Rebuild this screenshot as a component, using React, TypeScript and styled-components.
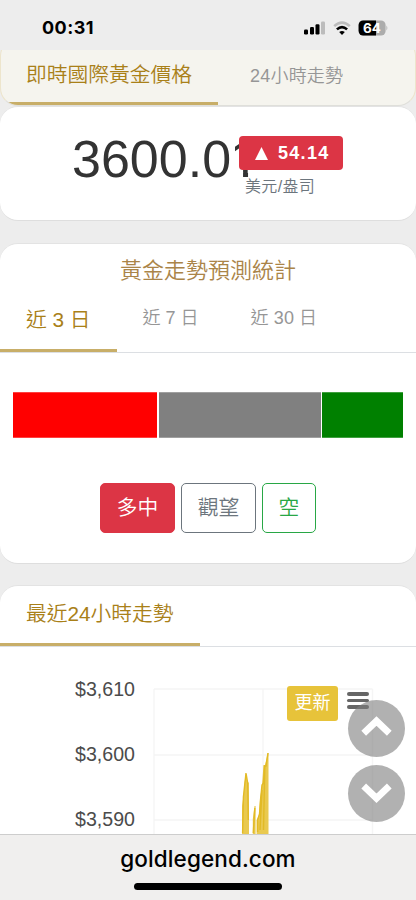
import React from "react";
import styled, { createGlobalStyle } from "styled-components";

const Global = createGlobalStyle`
  * { box-sizing: border-box; }
  body { margin: 0; background: #ededed; font-family: "Liberation Sans", "Noto Sans CJK TC", sans-serif; font-weight: 350; }
  button { font: inherit; cursor: pointer; }
`;

const Screen = styled.div`
  position: relative;
  display: flex;
  flex-direction: column;
  width: 416px;
  height: 900px;
  overflow: hidden;
  background: #ededed;
`;
const StatusBar = styled.header`
  flex: none;
  height: 50px;
  padding: 5px 28px 0 42px;
  display: flex;
  align-items: center;
  justify-content: space-between;
`;
const Clock = styled.span`
  font: 700 18px/22px Inter, sans-serif;
  color: #000;
  letter-spacing: 0.45px;
`;
const Content = styled.main`
  flex: none;
  height: 784px;
  overflow: hidden;
  display: flex;
  flex-direction: column;
`;
const StickyClip = styled.div`
  flex: none;
  height: 56px;
  overflow: hidden;
`;
const StickyTabs = styled.nav`
  display: flex;
  align-items: flex-end;
  height: 68px;
  margin-top: -12px;
  border: 1px solid #ede5cc;
  border-top-color: transparent;
  border-bottom-color: #dfdfda;
  border-radius: 18px;
  background: #f5f4ee;
  overflow: hidden;
`;
const Tabs = styled.nav<{ $h?: number }>`
  display: flex;
  height: ${p => p.$h ?? 66}px;
  border-bottom: 1px solid #dcdfe3;
`;
const Tab = styled.span<{ $active?: boolean; $pad?: number; $h?: number; $line?: number; $gap?: number }>`
  height: ${p => p.$h ?? 65}px;
  padding: 0 26px 0 ${p => p.$pad ?? 26}px;
  border-bottom: 3px solid ${p => (p.$active ? "#c8ae68" : "transparent")};
  font-size: ${p => (p.$active ? 20.75 : 18)}px;
  line-height: ${p => p.$line ?? 65}px;
  color: ${p => (p.$active ? "#a98018" : "#969696")};
  letter-spacing: ${p => p.$gap ?? 0}px;
  white-space: nowrap;
`;
const Card = styled.section<{ $h: number; $gap?: number }>`
  flex: none;
  height: ${p => p.$h}px;
  margin-bottom: ${p => p.$gap ?? 22}px;
  border-top: 1px solid #e3e3e3;
  border-bottom: 1px solid #dedede;
  border-radius: 18px;
  background: #fff;
  overflow: hidden;
`;
const PriceRow = styled.div`
  display: flex;
  align-items: flex-start;
  padding: 22px 0 0 72px;
`;
const Price = styled.strong`
  font-weight: 400;
  font-size: 52px;
  line-height: 60px;
  width: 167px;
  white-space: nowrap;
  color: #333;
`;
/* The last digit keeps only its stem, without the foot serif. */
const PlainOne = styled.span`
  display: inline-block;
  margin-left: -1px;
  clip-path: polygon(0 0, 100% 0, 100% 43px, 18px 43px, 18px 100%, 13px 100%, 13px 43px, 0 43px);
`;
const Change = styled.div`
  position: relative;
  margin-top: 7px;
`;
const Badge = styled.div`
  display: flex;
  align-items: center;
  width: 104px;
  height: 34px;
  padding-left: 15px;
  gap: 9px;
  border-radius: 4px;
  background: #dc3545;
  color: #fff;
  font-size: 18px;
  font-weight: 700;
  letter-spacing: 1.3px;
`;
const Unit = styled.div`
  padding: 5px 0 0 6px;
  font-size: 16px;
  line-height: 24px;
  color: #6c757d;
  letter-spacing: 0.35px;
`;
const Title = styled.h2`
  margin: 0;
  padding-top: 11px;
  height: 43px;
  text-align: center;
  font-size: 22px;
  line-height: 32px;
  font-weight: 350;
  color: #aa8448;
`;
const Forecast = styled.div`
  display: grid;
  grid-template-columns: 144px 162px 80.5px;
  gap: 1.6px;
  height: 46px;
  margin: 39px 13px 45px;
`;
const Segment = styled.div<{ $color: string }>`
  background: ${p => p.$color};
  border-block: 1px solid rgba(255, 255, 255, 0.25);
`;
const Actions = styled.div`
  display: flex;
  justify-content: center;
  gap: 5.5px;
`;
const ActionButton = styled.button<{ $color: string; $filled?: boolean; $w: number }>`
  width: ${p => p.$w}px;
  height: 49.5px;
  padding: 0;
  border: 1.5px solid ${p => p.$color};
  border-radius: 5px;
  background: ${p => (p.$filled ? p.$color : "#fff")};
  color: ${p => (p.$filled ? "#fff" : p.$color)};
  font-size: 20.75px;
  line-height: 30px;
`;
const Chart = styled.div`
  position: relative;
  height: 188px;
`;
const ChartSvg = styled.svg`
  display: block;
  text { font: 400 19.6px "Liberation Sans", sans-serif; fill: #4b4b4b; text-anchor: end; }
`;
const Refresh = styled.button`
  position: absolute;
  left: 287px;
  top: 39px;
  width: 51px;
  height: 35px;
  padding: 0 0 5px;
  border: 0;
  border-radius: 3px;
  background: #e7c33a;
  color: #fff;
  font-size: 18px;
  font-weight: 400;
`;
const Menu = styled.div`
  position: absolute;
  left: 346.5px;
  top: 45px;
  width: 22px;
  display: grid;
  gap: 3px;
`;
const MenuLine = styled.span`
  height: 3.7px;
  border-radius: 2px;
  background: #666;
`;
const ScrollControls = styled.div`
  position: absolute;
  right: 11.5px;
  top: 699.5px;
  display: grid;
  gap: 8px;
`;
const Round = styled.button`
  width: 57px;
  height: 57px;
  padding: 0;
  border: 0;
  border-radius: 50%;
  background: rgba(125, 125, 125, 0.6);
`;
const ArrowSvg = styled.svg`
  display: block;
`;
const BrowserBar = styled.footer`
  flex: none;
  height: 66px;
  border-top: 1px solid #cdcdcd;
  background: #f0efee;
  display: flex;
  flex-direction: column;
  align-items: center;
`;
const Address = styled.span`
  margin-top: 10px;
  font: 500 22.5px/28px Inter, sans-serif;
  letter-spacing: 0.1px;
  color: #000;
`;
const HomeBar = styled.div`
  width: 148px;
  height: 7px;
  margin-top: 10px;
  border-radius: 4px;
  background: #000;
`;

function StatusIcons() {
  return (
    <svg width="84" height="18" viewBox="304 18.5 84 18">
      <rect x="304" y="29" width="4" height="5" rx="1.2" />
      <rect x="310" y="26.5" width="4" height="7.5" rx="1.2" />
      <rect x="315.5" y="23.8" width="4" height="10.2" rx="1.2" />
      <rect x="321" y="21" width="4" height="13" rx="1.2" fill="#bcbcbc" />
      <path d="M334.2 25.6Q342 18.6 349.8 25.6" fill="none" stroke="#bcbcbc" strokeWidth="2.6" />
      <path d="M336.9 28.9Q342 24.4 347.1 28.9" fill="none" stroke="#000" strokeWidth="2.6" />
      <path d="M339.2 31.4Q342 29.4 344.8 31.4L342 34.4Z" />
      <rect x="358.6" y="20" width="27" height="15" rx="4.6" fill="#acacac" />
      <path d="M363.2 20H376V35H363.2A4.6 4.6 0 0 1 358.6 30.4V24.6A4.6 4.6 0 0 1 363.2 20Z" />
      <path d="M386.4 25Q388.4 27.5 386.4 30Z" fill="#b5b5b5" />
      <text x="372" y="32.3" textAnchor="middle" fontFamily="Inter" fontWeight="700" fontSize="13.5" fill="#fff">64</text>
    </svg>
  );
}

function Arrow({ down }: { down?: boolean }) {
  return (
    <ArrowSvg width="57" height="57" viewBox="0 0 57 57">
      <path
        d={down ? "M15.7 21L28.5 33.2L41.3 21" : "M15.7 33.3L28.5 21L41.3 33.3"}
        fill="none"
        stroke="#fff"
        strokeWidth="6.8"
      />
    </ArrowSvg>
  );
}

export default function App() {
  return (
    <>
      <Global />
      <Screen>
        <StatusBar>
          <Clock>00:31</Clock>
          <StatusIcons />
        </StatusBar>
        <Content>
          <StickyClip>
            <StickyTabs>
              <Tab $active $pad={25} $h={66} $line={72}>即時國際黃金價格</Tab>
              <Tab $pad={32} $h={66} $line={75} $gap={0.2}>24小時走勢</Tab>
            </StickyTabs>
          </StickyClip>
          <Card $h={115}>
            <PriceRow>
              <Price>3600.0<PlainOne>1</PlainOne></Price>
              <Change>
                <Badge>
                  <svg width="15" height="13" viewBox="0 0 15 13"><path d="M7.5 0L14 13H1Z" fill="#fff" /></svg>
                  54.14
                </Badge>
                <Unit>美元/盎司</Unit>
              </Change>
            </PriceRow>
          </Card>
          <Card $h={321} $gap={21}>
            <Title>黃金走勢預測統計</Title>
            <Tabs>
              <Tab $active>近 3 日</Tab>
              <Tab $line={63}>近 7 日</Tab>
              <Tab $line={63} $gap={0.1}>近 30 日</Tab>
            </Tabs>
            <Forecast>
              <Segment $color="#f00" />
              <Segment $color="#808080" />
              <Segment $color="#008000" />
            </Forecast>
            <Actions>
              <ActionButton $color="#dc3545" $filled $w={75.5}>多中</ActionButton>
              <ActionButton $color="#6c757d" $w={75.5}>觀望</ActionButton>
              <ActionButton $color="#28a745" $w={54.5}>空</ActionButton>
            </Actions>
          </Card>
          <Card $h={280}>
            <Tabs $h={61}>
              <Tab $active $h={60} $line={56}>最近24小時走勢</Tab>
            </Tabs>
            <Chart>
              <ChartSvg width="416" height="188" viewBox="0 647 416 188">
                <path d="M154 689V836M263 689V836M372.5 689V836M154 689H372.5M154 755H372.5M154 820H372.5" fill="none" stroke="#f5f5f5" strokeWidth="1.4" />
                <text x="135" y="696">$3,610</text>
                <text x="135" y="761">$3,600</text>
                <text x="135" y="826">$3,590</text>
                <path d="M242 836V806L243.5 796L244.6 782L246 773L247.3 781L248.8 783L249 806V836ZM252.8 836V819L254.5 806H255.6V836ZM256.6 836V820L259 815L260 800L262 785L263.5 765H265L266.6 758L267.5 753H268.5V836Z" fill="#e9c94f" />
                <path d="M242.6 833L243.4 797L246 773L247.7 783L248.3 820M253.3 833L254.8 808M257.6 832V820L259.5 814L260.5 800L262 785L263.5 783L264.5 766H266L268 753M260 830L262 790M263.5 830L264.8 766" fill="none" stroke="#e2ba25" strokeWidth="1.4" />
              </ChartSvg>
              <Refresh>更新</Refresh>
              <Menu><MenuLine /><MenuLine /><MenuLine /></Menu>
            </Chart>
          </Card>
        </Content>
        <BrowserBar>
          <Address>goldlegend.com</Address>
          <HomeBar />
        </BrowserBar>
        <ScrollControls>
          <Round aria-label="Up"><Arrow /></Round>
          <Round aria-label="Down"><Arrow down /></Round>
        </ScrollControls>
      </Screen>
    </>
  );
}
